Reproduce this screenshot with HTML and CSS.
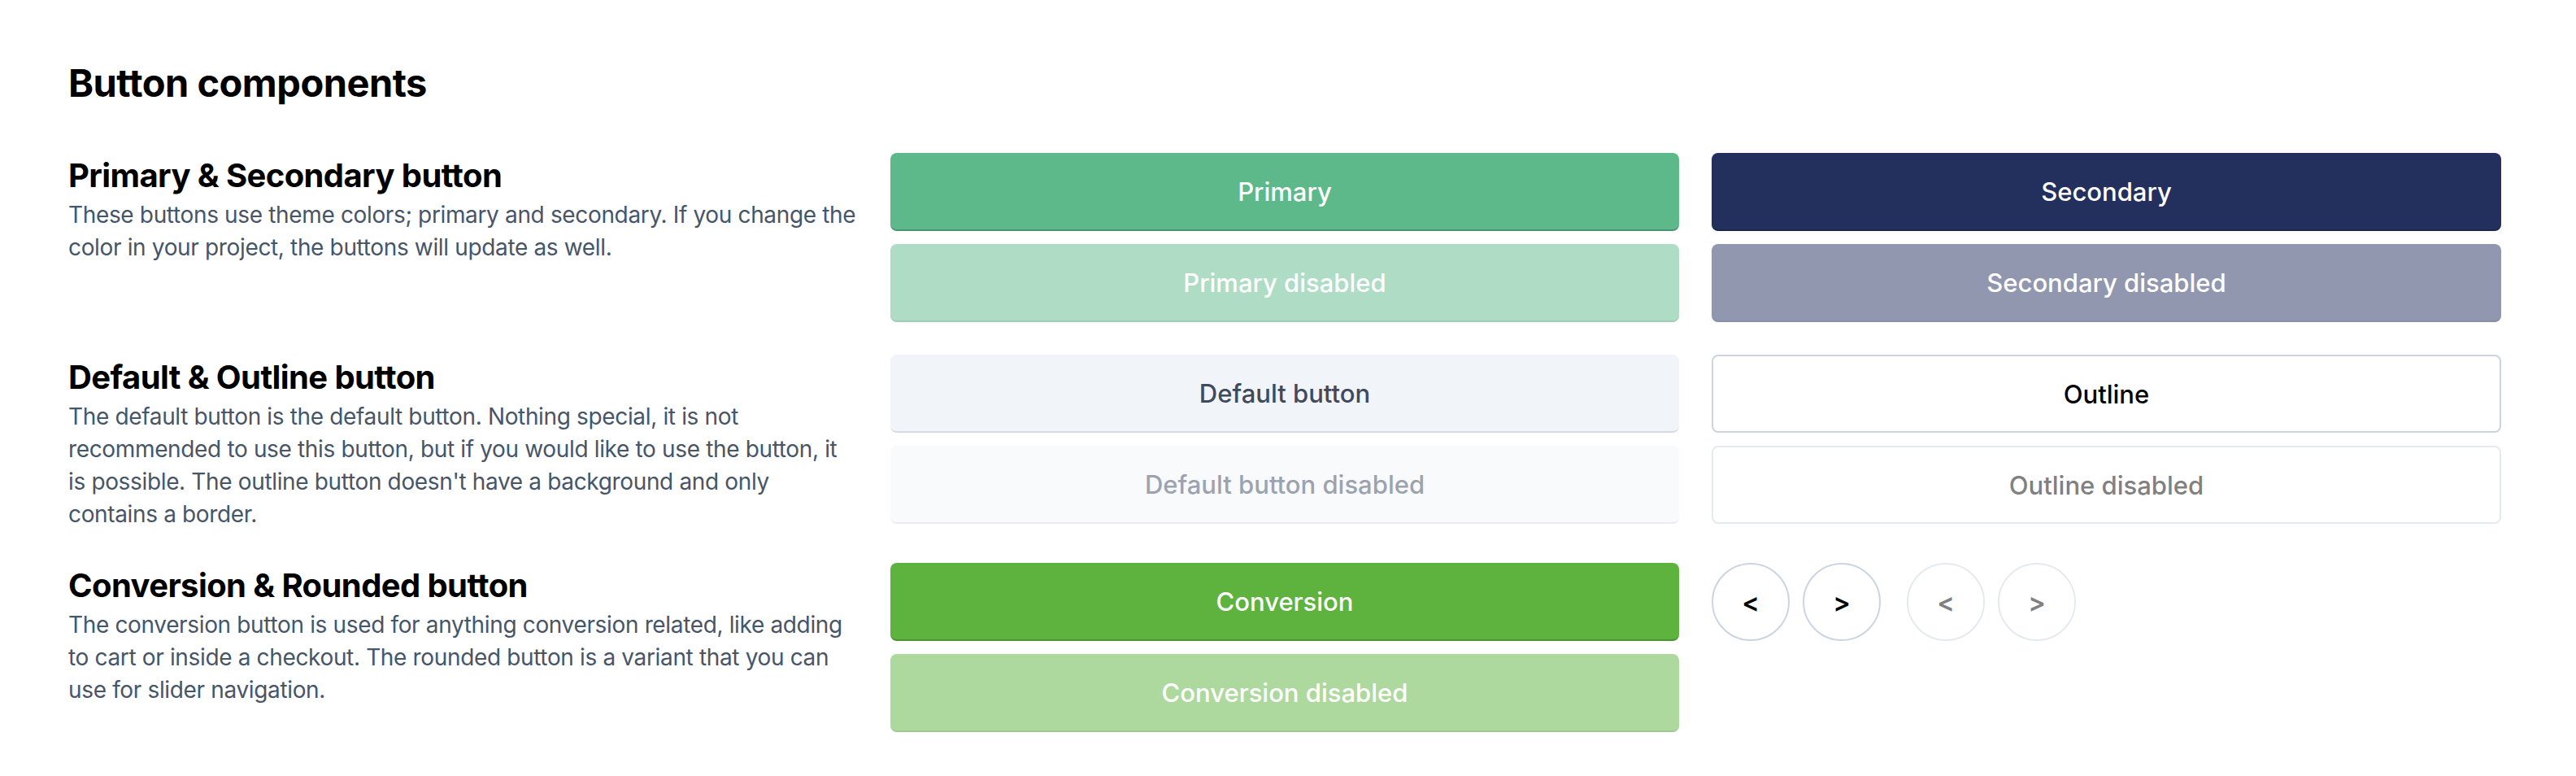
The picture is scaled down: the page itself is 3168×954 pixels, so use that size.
FILE: index.html
```html
<!DOCTYPE html>
<html lang="en">
<head>
<meta charset="utf-8">
<title>Button components</title>
<link rel="stylesheet" href="styles.css">
</head>
<body>
<main class="page">
  <h1 class="title">Button components</h1>

  <section class="row">
    <div class="info">
      <h2 class="heading">Primary &amp; Secondary button</h2>
      <p class="desc">These buttons use theme colors; primary and secondary. If you change the color in your project, the buttons will update as well.</p>
    </div>
    <div class="stack">
      <button class="btn btn-primary">Primary</button>
      <button class="btn btn-primary" disabled>Primary disabled</button>
    </div>
    <div class="stack">
      <button class="btn btn-secondary">Secondary</button>
      <button class="btn btn-secondary" disabled>Secondary disabled</button>
    </div>
  </section>

  <section class="row">
    <div class="info">
      <h2 class="heading">Default &amp; Outline button</h2>
      <p class="desc">The default button is the default button. Nothing special, it is not recommended to use this button, but if you would like to use the button, it is possible. The outline button doesn't have a background and only contains a border.</p>
    </div>
    <div class="stack">
      <button class="btn btn-default">Default button</button>
      <button class="btn btn-default" disabled>Default button disabled</button>
    </div>
    <div class="stack">
      <button class="btn btn-outline">Outline</button>
      <button class="btn btn-outline" disabled>Outline disabled</button>
    </div>
  </section>

  <section class="row">
    <div class="info">
      <h2 class="heading">Conversion &amp; Rounded button</h2>
      <p class="desc">The conversion button is used for anything conversion related, like adding to cart or inside a checkout. The rounded button is a variant that you can use for slider navigation.</p>
    </div>
    <div class="stack">
      <button class="btn btn-conversion">Conversion</button>
      <button class="btn btn-conversion" disabled>Conversion disabled</button>
    </div>
    <div class="rounds">
      <div class="pair">
        <button class="round">&lt;</button>
        <button class="round">&gt;</button>
      </div>
      <div class="pair">
        <button class="round" disabled>&lt;</button>
        <button class="round" disabled>&gt;</button>
      </div>
    </div>
  </section>
</main>
</body>
</html>
```

FILE: styles.css
```css
* {
  box-sizing: border-box;
}

html, body {
  margin: 0;
  background: #ffffff;
}

body {
  font-family: Inter, "Noto Sans", "Liberation Sans", sans-serif;
  color: #000000;
}

.page {
  padding: 70px 92px 40px 84px;
  display: flex;
  flex-direction: column;
  gap: 40px;
}

.title {
  margin: 0 0 14px 0;
  font-size: 47px;
  line-height: 64px;
  font-weight: 700;
  letter-spacing: -0.5px;
}

.row {
  display: grid;
  grid-template-columns: 971px 970px 971px;
  column-gap: 40px;
  align-items: start;
}

.heading {
  margin: 0;
  font-size: 40px;
  line-height: 56px;
  font-weight: 700;
  letter-spacing: -0.6px;
}

.desc {
  margin: 0;
  font-size: 28px;
  line-height: 40px;
  letter-spacing: -0.35px;
  color: #475569;
}

.stack {
  display: flex;
  flex-direction: column;
  gap: 16px;
}

.btn {
  height: 96px;
  width: 100%;
  border: 0;
  border-radius: 8px;
  font-family: inherit;
  font-size: 31px;
  font-weight: 500;
  cursor: pointer;
}

.btn-primary {
  background: #5db989;
  border-bottom: 2px solid #4a9570;
  color: #ffffff;
}

.btn-primary:disabled {
  background: #afdcc5;
  border-bottom-color: #a3ccb7;
}

.btn-secondary {
  background: #23305d;
  border-bottom: 2px solid #1b264b;
  color: #ffffff;
}

.btn-secondary:disabled {
  background: #9297b0;
  border-bottom-color: #8a8fa6;
}

.btn-default {
  background: #f1f4f8;
  border-bottom: 2px solid #d6dce4;
  color: #3f4a5c;
}

.btn-default:disabled {
  background: #f8fafc;
  border-bottom-color: #e9edf2;
  color: #9ca3af;
}

.btn-outline {
  background: #ffffff;
  border: 2px solid #cbd5e1;
  color: #000000;
}

.btn-outline:disabled {
  border-color: #e5e9f0;
  color: #808080;
}

.btn-conversion {
  background: #5eb33f;
  border-bottom: 2px solid #4a9232;
  color: #ffffff;
}

.btn-conversion:disabled {
  background: #aed99e;
  border-bottom-color: #a1c894;
}

.rounds {
  display: flex;
  gap: 32px;
}

.pair {
  display: flex;
  gap: 16px;
}

.round {
  width: 96px;
  height: 96px;
  border-radius: 50%;
  border: 2px solid #cbd5e1;
  background: #ffffff;
  color: #000000;
  font-family: inherit;
  font-size: 32px;
  font-weight: 600;
  padding: 0;
  cursor: pointer;
}

.round:disabled {
  border-color: #e5e9f0;
  color: #808080;
}
```
